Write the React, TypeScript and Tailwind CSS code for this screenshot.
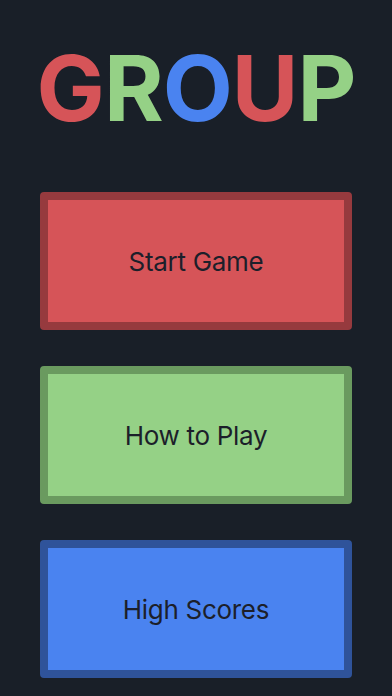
import React from "react";

const buttons = [
  { label: "Start Game", cls: "bg-[#d65458] border-[#963a3e]" },
  { label: "How to Play", cls: "bg-[#95d186] border-[#6a9a5f]" },
  { label: "High Scores", cls: "bg-[#4a83f0] border-[#2f539a]" },
];

export default function App() {
  return (
    <div
      className="w-[392px] h-[696px] bg-[#191f28] flex flex-col items-center overflow-hidden"
      style={{ fontFamily: "Inter, 'Noto Sans', sans-serif" }}
    >
      <h1 className="mt-[38px] h-[100px] flex items-center text-[91px] font-bold leading-none tracking-[-1px]">
        <span className="text-[#d65458]">G</span>
        <span className="text-[#95d186]">R</span>
        <span className="text-[#4a83f0]">O</span>
        <span className="text-[#d65458]">U</span>
        <span className="text-[#95d186]">P</span>
      </h1>
      <div className="mt-[54px] flex flex-col gap-[36px]">
        {buttons.map((b) => (
          <button
            key={b.label}
            className={`w-[312px] h-[138px] border-[8px] rounded-[4px] flex items-center justify-center text-[26px] tracking-[-0.3px] text-[#1c1f2a] ${b.cls}`}
          >
            {b.label}
          </button>
        ))}
      </div>
    </div>
  );
}
